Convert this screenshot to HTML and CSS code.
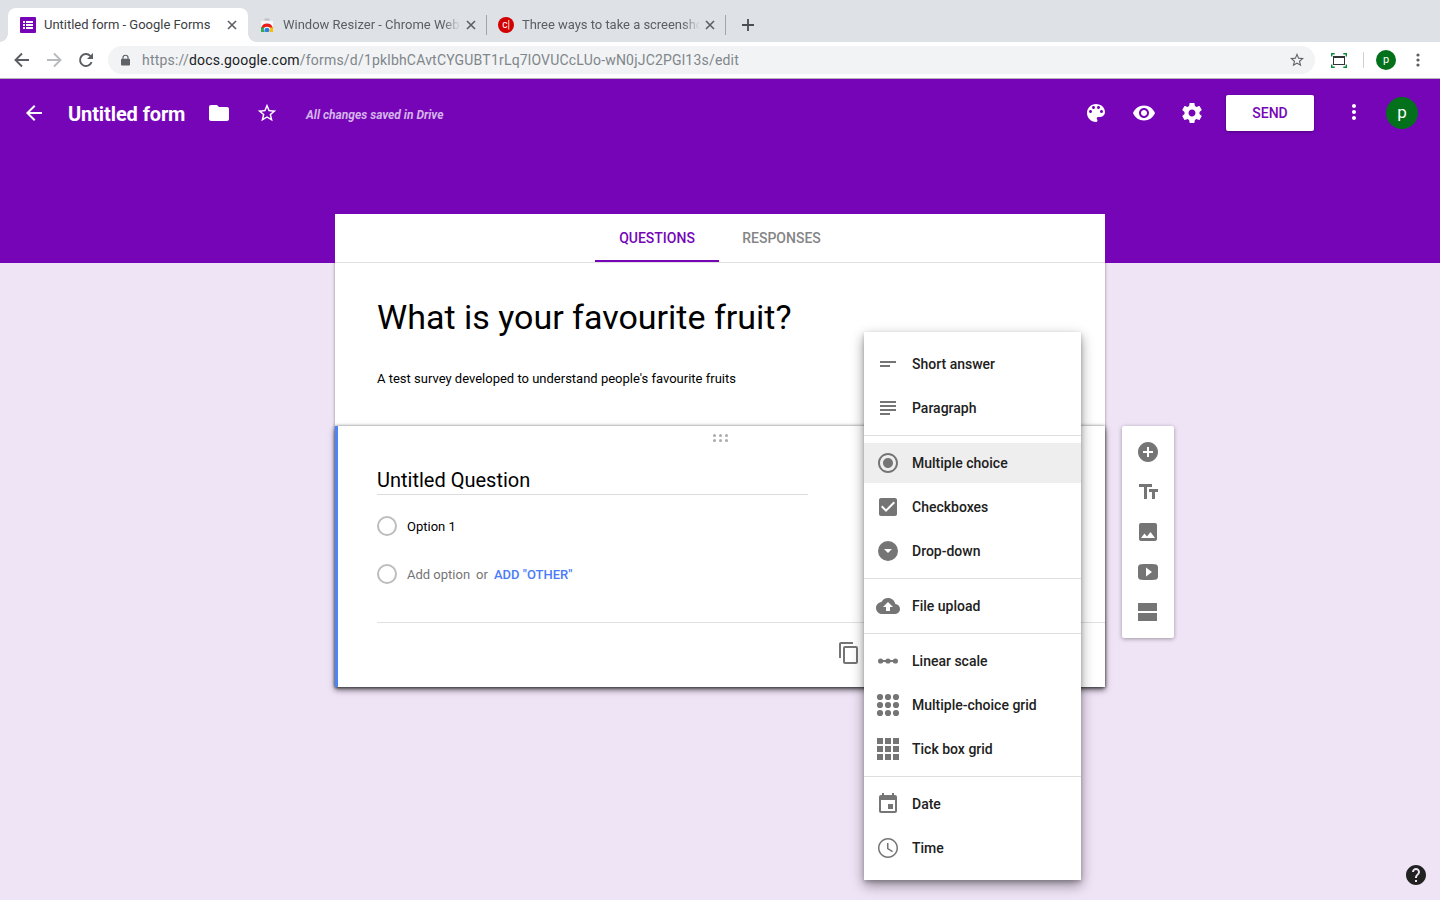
FILE: index.html
```html
<!DOCTYPE html>
<html lang="en">
<head>
<meta charset="utf-8">
<title>Untitled form - Google Forms</title>
<link rel="stylesheet" href="styles.css">
</head>
<body>
<div class="tabstrip">
  <div class="tab active">
    <svg class="fav" viewBox="0 0 16 16"><rect width="16" height="16" rx="1" fill="#7605b8"/><path fill="#fff" d="M3 4h2v2H3zM6 4h7v2H6zM3 7h2v2H3zM6 7h7v2H6zM3 10h2v2H3zM6 10h7v2H6z"/></svg>
    <span class="tab-title t1">Untitled form - Google Forms</span>
    <svg class="close" viewBox="0 0 10 10"><path d="M1 1l8 8M9 1L1 9"/></svg>
  </div>
  <div class="tab second">
    <svg class="fav" viewBox="0 0 16 16"><rect x="5.500" y="1.500" width="5" height="2" fill="#bfc1c4"/><path fill="#f8f8f8" d="M2 4h12V15H2z"/><path fill="#34a853" d="M2 10h4l2 5H2z"/><path fill="#fbbc04" d="M14 10h-4l-2 5h6z"/><path fill="#ea1c1c" d="M2.500 10.500a5.600 4.800 0 0 1 11 0z"/><path fill="#fff" d="M4.800 13a3.200 3.200 0 0 1 6.400 0l-1.200 2H6z"/><path fill="#2b7de9" d="M5.500 13.200a2.500 2.500 0 0 1 5 0L9.600 15H6.400z"/></svg>
    <span class="tab-title fade t2">Window Resizer - Chrome Web</span>
    <svg class="close" viewBox="0 0 10 10"><path d="M1 1l8 8M9 1L1 9"/></svg>
  </div>
  <div class="tab third">
    <div class="fav cnet">c|</div>
    <span class="tab-title fade t3">Three ways to take a screensho</span>
    <svg class="close" viewBox="0 0 10 10"><path d="M1 1l8 8M9 1L1 9"/></svg>
  </div>
  <svg class="newtab" viewBox="0 0 12 12"><path d="M6 0v12M0 6h12"/></svg>
</div>
<div class="toolbar">
  <svg class="nav" viewBox="0 0 16 16"><path d="M15 8H2M8 1.500L1.500 8 8 14.500"/></svg>
  <svg class="nav dim" viewBox="0 0 16 16"><path d="M1 8h13M8 1.500L14.500 8 8 14.500"/></svg>
  <svg class="nav" viewBox="0 0 16 16"><path d="M13.600 10.200A6 6 0 1 1 12.300 3.800L14 5.500"/><path class="solid" d="M15 1v6H9z"/></svg>
  <div class="omnibox">
    <svg class="lock" viewBox="0 0 10 12"><path fill="#5f6368" d="M1 4.500h8q1 0 1 1V11q0 1-1 1H1q-1 0-1-1V5.500q0-1 1-1z"/><path fill="none" stroke="#5f6368" stroke-width="1.300" d="M2.200 5V3.200a2.800 2.500 0 0 1 5.600 0V5"/></svg>
    <span class="url">https://<b>docs.google.com</b>/forms/d/1pklbhCAvtCYGUBT1rLq7lOVUCcLUo-wN0jJC2PGl13s/edit</span>
    <svg class="ostar" viewBox="2 2 20 20"><path d="M22 9.240l-7.190-.62L12 2 9.190 8.630 2 9.240l5.460 4.730L5.820 21 12 17.270 18.180 21l-1.630-7.030L22 9.240zM12 15.400l-3.760 2.270 1-4.280-3.320-2.880 4.380-.38L12 6.100l1.710 4.040 4.380.38-3.320 2.880 1 4.280L12 15.400z"/></svg>
  </div>
  <svg class="resizer" viewBox="0 0 16 15"><rect x="2.500" y="3.500" width="11" height="8" fill="#fff" stroke="#333"/><path stroke="#333" stroke-width="2" d="M2 4h12"/><path fill="none" stroke="#0b8a3a" stroke-width="1.400" d="M.7 3.500V.7h3M12.300.7h3v2.800M15.300 11.500v2.800h-3M3.700 14.300h-3v-2.800"/></svg>
  <div class="tb-sep"></div>
  <div class="avatar small">p</div>
  <svg class="kebab" viewBox="0 0 4 14"><circle cx="2" cy="2" r="1.600"/><circle cx="2" cy="7" r="1.600"/><circle cx="2" cy="12" r="1.600"/></svg>
</div>
<main class="app">
  <header class="bar">
    <svg class="i24 back" viewBox="0 0 24 24"><path d="M20 11H7.830l5.590-5.590L12 4l-8 8 8 8 1.410-1.410L7.830 13H20v-2z"/></svg>
    <span class="title">Untitled form</span>
    <svg class="i24 folder" viewBox="0 0 24 24"><path d="M10 4H4c-1.100 0-1.990.9-1.990 2L2 18c0 1.100.9 2 2 2h16c1.100 0 2-.9 2-2V8c0-1.100-.9-2-2-2h-8l-2-2z"/></svg>
    <svg class="i24 fstar" viewBox="0 0 24 24"><path d="M22 9.240l-7.190-.62L12 2 9.190 8.630 2 9.240l5.460 4.730L5.820 21 12 17.270 18.180 21l-1.630-7.030L22 9.240zM12 15.400l-3.760 2.270 1-4.280-3.320-2.880 4.380-.38L12 6.100l1.710 4.040 4.380.38-3.320 2.880 1 4.280L12 15.400z"/></svg>
    <span class="saved">All changes saved in Drive</span>
    <div class="actions">
      <svg class="i24" viewBox="0 0 24 24"><path d="M12 3c-4.970 0-9 4.030-9 9s4.030 9 9 9c.83 0 1.500-.67 1.500-1.500 0-.39-.15-.74-.39-1.010-.23-.26-.38-.61-.38-.99 0-.83.67-1.500 1.500-1.500H16c2.760 0 5-2.240 5-5 0-4.420-4.030-8-9-8zm-5.500 9c-.83 0-1.500-.67-1.500-1.500S5.670 9 6.500 9 8 9.670 8 10.500 7.330 12 6.500 12zm3-4C8.670 8 8 7.330 8 6.500S8.670 5 9.500 5s1.500.67 1.500 1.500S10.330 8 9.500 8zm5 0c-.83 0-1.500-.67-1.500-1.500S13.670 5 14.500 5s1.500.67 1.500 1.500S15.330 8 14.500 8zm3 4c-.83 0-1.500-.67-1.500-1.500S16.670 9 17.500 9s1.500.67 1.500 1.500-.67 1.500-1.500 1.500z"/></svg>
      <svg class="i24" viewBox="0 0 24 24"><path d="M12 4.500C7 4.500 2.730 7.610 1 12c1.730 4.390 6 7.500 11 7.500s9.270-3.110 11-7.500c-1.730-4.390-6-7.500-11-7.500zM12 17c-2.760 0-5-2.240-5-5s2.240-5 5-5 5 2.240 5 5-2.240 5-5 5zm0-8c-1.660 0-3 1.340-3 3s1.340 3 3 3 3-1.340 3-3-1.340-3-3-3z"/></svg>
      <svg class="i24" viewBox="0 0 24 24"><path d="M19.430 12.980c.04-.32.07-.64.07-.98s-.03-.66-.07-.98l2.110-1.650c.19-.15.24-.42.12-.64l-2-3.460c-.12-.22-.39-.3-.61-.22l-2.490 1c-.52-.4-1.080-.73-1.690-.98l-.38-2.650C14.460 2.180 14.250 2 14 2h-4c-.25 0-.46.18-.49.42l-.38 2.650c-.61.25-1.170.59-1.690.98l-2.490-1c-.23-.09-.49 0-.61.22l-2 3.460c-.13.22-.07.49.12.64l2.110 1.650c-.04.32-.07.65-.07.98s.03.66.07.98l-2.110 1.650c-.19.15-.24.42-.12.64l2 3.460c.12.22.39.3.61.22l2.490-1c.52.4 1.080.73 1.690.98l.38 2.650c.03.24.24.42.49.42h4c.25 0 .46-.18.49-.42l.38-2.650c.61-.25 1.170-.59 1.690-.98l2.490 1c.23.09.49 0 .61-.22l2-3.460c.12-.22.07-.49-.12-.64l-2.110-1.650zM12 15.500c-1.930 0-3.500-1.570-3.500-3.500s1.570-3.500 3.500-3.500 3.500 1.570 3.500 3.500-1.570 3.500-3.500 3.500z"/></svg>
    </div>
    <div class="send">SEND</div>
    <svg class="i24 more" viewBox="0 0 24 24"><path d="M12 8c1.100 0 2-.9 2-2s-.9-2-2-2-2 .9-2 2 .9 2 2 2zm0 2c-1.100 0-2 .9-2 2s.9 2 2 2 2-.9 2-2-.9-2-2-2zm0 6c-1.100 0-2 .9-2 2s.9 2 2 2 2-.9 2-2-.9-2-2-2z"/></svg>
    <div class="avatar">p</div>
  </header>
  <div class="workspace">
    <div class="form">
      <nav class="tabs"><span class="ftab on">QUESTIONS</span><span class="ftab">RESPONSES</span></nav>
      <section class="intro">
        <h1>What is your favourite fruit?</h1>
        <p>A test survey developed to understand people's favourite fruits</p>
      </section>
      <section class="question">
        <svg class="grip" viewBox="0 0 16 8"><circle cx="2.500" cy="1.500" r="1.500"/><circle cx="8.500" cy="1.500" r="1.500"/><circle cx="14.500" cy="1.500" r="1.500"/><circle cx="2.500" cy="6.500" r="1.500"/><circle cx="8.500" cy="6.500" r="1.500"/><circle cx="14.500" cy="6.500" r="1.500"/></svg>
        <div class="qtitle">Untitled Question</div>
        <div class="option"><i class="ring"></i><span>Option 1</span></div>
        <div class="option add"><i class="ring"></i><span class="muted">Add option</span><span class="muted or">or</span><span class="other">ADD "OTHER"</span></div>
        <div class="qfoot"><svg class="copy" viewBox="0 0 24 24"><path d="M16 1H4c-1.100 0-2 .9-2 2v14h2V3h12V1zm3 4H8c-1.100 0-2 .9-2 2v14c0 1.100.9 2 2 2h11c1.100 0 2-.9 2-2V7c0-1.100-.9-2-2-2zm0 16H8V7h11v14z"/></svg></div>
      </section>
    </div>
    <aside class="side">
      <svg viewBox="0 0 24 24"><path d="M12 2C6.480 2 2 6.480 2 12s4.480 10 10 10 10-4.480 10-10S17.520 2 12 2zm5 11h-4v4h-2v-4H7v-2h4V7h2v4h4v2z"/></svg>
      <svg viewBox="0 0 24 24"><path d="M3 4v3h5v12h3V7h5V4H3zm19 5h-9v3h3v7h3v-7h3V9z"/></svg>
      <svg viewBox="0 0 24 24"><path d="M21 19V5c0-1.100-.9-2-2-2H5c-1.100 0-2 .9-2 2v14c0 1.100.9 2 2 2h14c1.100 0 2-.9 2-2zM8.500 13.500l2.500 3.010L14.500 12l4.500 6H5l3.500-4.500z"/></svg>
      <svg viewBox="0 0 24 24"><path fill-rule="evenodd" d="M5 4.300C9 3.900 15 3.900 19 4.300C21 4.500 22 5.500 22 7.500V16.500C22 18.500 21 19.500 19 19.700C15 20.100 9 20.100 5 19.700C3 19.500 2 18.500 2 16.500V7.500C2 5.500 3 4.500 5 4.300zM10 7.500v9l6-4.500z"/></svg>
      <svg viewBox="0 0 24 24"><path d="M2.500 3h18q.5 0 .5.500V11H2V3.500q0-.5.500-.5zM2 13h19v7.500q0 .5-.5.500h-18q-.5 0-.5-.5z"/></svg>
    </aside>
  </div>
  <div class="menu">
    <div class="item"><svg viewBox="0 0 24 24"><path d="M4 9h16v2H4zM4 13h10v2H4z"/></svg><span>Short answer</span></div>
    <div class="item"><svg viewBox="0 0 24 24"><path d="M4 5h16v2H4zM4 9h16v2H4zM4 13h16v2H4zM4 17h10v2H4z"/></svg><span>Paragraph</span></div>
    <hr>
    <div class="item sel"><svg viewBox="0 0 24 24"><path d="M12 7c-2.760 0-5 2.240-5 5s2.240 5 5 5 5-2.240 5-5-2.240-5-5-5zm0-5C6.480 2 2 6.480 2 12s4.480 10 10 10 10-4.480 10-10S17.520 2 12 2zm0 18c-4.420 0-8-3.580-8-8s3.580-8 8-8 8 3.580 8 8-3.580 8-8 8z"/></svg><span>Multiple choice</span></div>
    <div class="item"><svg viewBox="0 0 24 24"><path d="M19 3H5c-1.110 0-2 .9-2 2v14c0 1.100.89 2 2 2h14c1.110 0 2-.9 2-2V5c0-1.100-.89-2-2-2zm-9 14l-5-5 1.410-1.410L10 14.170l7.590-7.590L19 8l-9 9z"/></svg><span>Checkboxes</span></div>
    <div class="item"><svg viewBox="0 0 24 24"><path fill-rule="evenodd" d="M12 2a10 10 0 1 0 0 20a10 10 0 1 0 0-20zM8 10h8l-4 4z"/></svg><span>Drop-down</span></div>
    <hr>
    <div class="item"><svg viewBox="0 0 24 24"><path d="M19.350 10.040C18.670 6.590 15.640 4 12 4 9.110 4 6.600 5.640 5.350 8.040 2.340 8.360 0 10.910 0 14c0 3.310 2.690 6 6 6h13c2.760 0 5-2.240 5-5 0-2.640-2.050-4.780-4.650-4.960zM14 13v4h-4v-4H7l5-5 5 5h-3z"/></svg><span>File upload</span></div>
    <hr>
    <div class="item"><svg viewBox="0 0 24 24"><path d="M4 11h16v2H4z"/><circle cx="4.600" cy="12" r="2.600"/><circle cx="12" cy="12" r="2.600"/><circle cx="19.400" cy="12" r="2.600"/></svg><span>Linear scale</span></div>
    <div class="item"><svg viewBox="0 0 24 24"><circle cx="4" cy="4" r="3.100"/><circle cx="12" cy="4" r="3.100"/><circle cx="20" cy="4" r="3.100"/><circle cx="4" cy="12" r="3.100"/><circle cx="12" cy="12" r="3.100"/><circle cx="20" cy="12" r="3.100"/><circle cx="4" cy="20" r="3.100"/><circle cx="12" cy="20" r="3.100"/><circle cx="20" cy="20" r="3.100"/></svg><span>Multiple-choice grid</span></div>
    <div class="item"><svg viewBox="0 0 24 24"><path d="M1 1h6v6H1zM9 1h6v6H9zM17 1h6v6h-6zM1 9h6v6H1zM9 9h6v6H9zM17 9h6v6h-6zM1 17h6v6H1zM9 17h6v6H9zM17 17h6v6h-6z"/></svg><span>Tick box grid</span></div>
    <hr>
    <div class="item"><svg viewBox="0 0 24 24"><path d="M17 12h-5v5h5v-5zM16 1v2H8V1H6v2H5c-1.110 0-1.990.9-1.990 2L3 19c0 1.100.89 2 2 2h14c1.100 0 2-.9 2-2V5c0-1.100-.9-2-2-2h-1V1h-2zm3 18H5V8h14v11z"/></svg><span>Date</span></div>
    <div class="item"><svg viewBox="0 0 24 24"><path d="M11.990 2C6.470 2 2 6.480 2 12s4.470 10 9.990 10C17.520 22 22 17.520 22 12S17.520 2 11.990 2zM12 20.500c-4.700 0-8.500-3.800-8.500-8.500S7.300 3.500 12 3.500s8.500 3.800 8.500 8.500-3.800 8.500-8.500 8.500zM12.500 7H11v6l5.250 3.150.75-1.230-4.500-2.670z"/></svg><span>Time</span></div>
  </div>
  <svg class="help" viewBox="2 2 20 20"><path d="M12 2C6.480 2 2 6.480 2 12s4.480 10 10 10 10-4.480 10-10S17.520 2 12 2zm1 17h-2v-2h2v2zm2.070-7.750l-.9.920C13.450 12.900 13 13.500 13 15h-2v-.5c0-1.100.45-2.100 1.170-2.830l1.240-1.260c.37-.36.590-.86.590-1.410 0-1.100-.9-2-2-2s-2 .9-2 2H8c0-2.210 1.790-4 4-4s4 1.790 4 4c0 .88-.36 1.680-.93 2.250z"/></svg>
</main>
</body>
</html>
```
FILE: styles.css
```css
* { box-sizing: border-box; }
body { margin: 0; width: 1440px; height: 900px; overflow: hidden; font-family: Roboto, sans-serif; color: #000; }
svg { display: block; flex: none; }
span { white-space: nowrap; }

.tabstrip { display: flex; align-items: flex-end; height: 42px; padding-left: 8px; background: #dee1e6; }
.tab { display: flex; align-items: center; height: 34px; font-size: 13px; color: #5b5e63; position: relative; }
.tab.active { width: 240px; padding: 0 11px 0 12px; background: #fff; border-radius: 8px 8px 0 0; color: #3c4043; }
.tab.active::before, .tab.active::after { content: ""; position: absolute; bottom: 0; width: 8px; height: 8px; }
.tab.active::before { left: -8px; background: radial-gradient(circle at 0 0, transparent 7.500px, #fff 8px); }
.tab.active::after { right: -8px; background: radial-gradient(circle at 100% 0, transparent 7.500px, #fff 8px); }
.tab.second { width: 239px; padding: 0 11px; }
.tab.third { width: 239px; padding: 0 11px; }
.tab.second::after, .tab.third::after { content: ""; position: absolute; right: 0; top: 7px; width: 1px; height: 20px; background: #a0a3a8; }
.fav { width: 16px; height: 16px; flex: none; }
.cnet { border-radius: 50%; background: #d20000; color: #fff; font-size: 10px; line-height: 15px; text-align: center; }
.tab-title { margin-left: 8px; overflow: hidden; flex: 1; min-width: 0; line-height: 18px; }
.t1 { letter-spacing: -0.020px; }
.t2 { letter-spacing: 0; margin-right: 5px; }
.t3 { letter-spacing: -0.030px; margin-right: 5px; }
.fade { -webkit-mask-image: linear-gradient(to right, #000 90%, transparent 100%); mask-image: linear-gradient(to right, #000 90%, transparent 100%); }
.close { width: 10px; height: 10px; stroke: #5b5e63; stroke-width: 1.600; fill: none; }
.newtab { width: 12px; height: 12px; margin: 0 0 11px 16px; stroke: #4a4d51; stroke-width: 1.800; }

.toolbar { display: flex; align-items: center; height: 37px; padding: 0 20px 0 14px; background: #fff; border-bottom: 1px solid #b6b4b8; }
.nav { width: 16px; height: 16px; margin-right: 16px; fill: none; stroke: #5a5d61; stroke-width: 1.900; }
.nav .solid { fill: #5a5d61; stroke: none; }
.nav.dim { stroke: #b8babd; }
.omnibox { display: flex; align-items: center; margin-left: -2px; width: 1207px; height: 28px; padding: 0 11px 0 13px; border-radius: 14px; background: #f1f3f4; }
.lock { width: 9px; height: 12px; }
.url { flex: 1; margin-left: 12px; font-size: 14px; letter-spacing: 0.195px; color: #80868b; }
.url b { font-weight: 400; color: #202124; }
.ostar { width: 14px; height: 14px; fill: #5f6368; }
.resizer { width: 16px; height: 15px; margin-left: 16px; }
.tb-sep { width: 1px; height: 16px; margin: 0 12px 0 16px; background: #cfd1d4; }
.avatar { display: flex; align-items: center; justify-content: center; width: 32px; height: 32px; padding-bottom: 2px; border-radius: 50%; background: #03701c; color: #fff; font-size: 17px; flex: none; }
.avatar.small { width: 20px; height: 20px; font-size: 11px; }
.kebab { width: 4px; height: 14px; margin-left: 20px; fill: #5a5d61; }

.app { position: relative; height: 821px; background: linear-gradient(#7605b8 184px, #efe3f6 184px); }
.bar { display: flex; align-items: center; height: 68px; padding: 0 22px; }
.i24 { width: 24px; height: 24px; fill: #fff; }
.title { width: 139px; margin-left: 22px; padding-top: 2px; font-size: 20px; font-weight: 700; letter-spacing: -0.100px; color: #fff; }
.fstar { margin-left: 24px; }
.fstar path { transform: scale(.92); transform-origin: 12px 12px; }
.saved { margin-left: 27px; padding-top: 3px; font-size: 12px; font-weight: 700; font-style: italic; color: #d5b4ea; }
.actions { display: flex; gap: 24px; margin-left: auto; }
.send { width: 88px; height: 36px; margin-left: 22px; border-radius: 2px; background: #fff; color: #7605b8; font-size: 14px; font-weight: 500; line-height: 36px; text-align: center; box-shadow: 0 1px 3px rgba(0,0,0,.35); }
.more { margin: -2px 20px 0 28px; }

.workspace { display: flex; gap: 17px; align-items: flex-start; padding: 67px 0 0 335px; }
.form { width: 770px; background: #fff; box-shadow: 0 1px 3px rgba(0,0,0,.4); clip-path: polygon(0 0, 100% 0, 100% 49px, calc(100% + 12px) 49px, calc(100% + 12px) calc(100% + 12px), -12px calc(100% + 12px), -12px 49px, 0 49px); }
.tabs { display: flex; justify-content: center; height: 49px; padding-right: 2px; background: #fff; border-bottom: 1px solid #e0e0e0; }
.ftab { width: 124px; height: 48px; font-size: 14px; font-weight: 500; line-height: 49px; text-align: center; color: #858585; }
.ftab.on { color: #7605b8; border-bottom: 2px solid #7605b8; }
.ftab:not(.on) { padding-left: 1px; }
.intro { height: 163px; padding: 33px 42px 0; }
h1 { margin: 0; font-size: 34px; font-weight: 400; line-height: 42px; white-space: nowrap; }
p { margin: 32px 0 0; font-size: 13px; line-height: 18px; white-space: nowrap; }
.question { height: 261px; padding: 8px 0 0 39px; border-left: 3px solid #4a86f7; background: #fff; box-shadow: 0 0 3px rgba(0,0,0,.4), 0 3px 6px rgba(0,0,0,.55); }
.grip { width: 16px; height: 8px; margin: 0 0 0 335px; fill: #ababab; }
.qtitle { width: 431px; height: 39px; margin-top: 14px; border-bottom: 1px solid #dcdcdc; font-size: 20px; line-height: 48px; }
.option { display: flex; align-items: center; height: 20px; margin-top: 21px; font-size: 13px; }
.option.add { margin-top: 28px; }
.ring { width: 20px; height: 20px; margin-right: 10px; border: 2px solid #bdbdbd; border-radius: 50%; }
.muted { color: #757575; }
.or { margin: 0 6px; }
.other { color: #4a7cf6; font-weight: 500; }
.qfoot { height: 65px; margin-top: 38px; padding: 18px 0 0 460px; border-top: 1px solid #e0e0e0; }
.copy { width: 24px; height: 24px; fill: #757575; }
.side { display: flex; flex-direction: column; gap: 16px; width: 52px; height: 212px; margin-top: 212px; padding: 14px; border-radius: 2px; background: #fff; box-shadow: 0 1px 4px rgba(0,0,0,.35); }
.side svg { width: 24px; height: 24px; fill: #757575; }

.menu { position: absolute; left: 864px; top: 253px; width: 217px; height: 548px; padding: 12px 0; display: flex; flex-direction: column; background: #fff; box-shadow: 0 2px 4px rgba(0,0,0,.2), 0 5px 12px rgba(0,0,0,.42); }
.item { display: flex; align-items: center; height: 40px; padding-left: 12px; font-size: 14px; font-weight: 500; color: #212121; flex: none; }
.item + .item { margin-top: 4px; }
.item svg { width: 24px; height: 24px; margin-right: 12px; fill: #757575; }
.item.sel { background: #eee; }
hr { width: 100%; height: 1px; margin: 7px 0; border: 0; background: #dedede; flex: none; }
.help { position: absolute; left: 1406px; top: 786px; width: 20px; height: 20px; fill: #212121; }
```
